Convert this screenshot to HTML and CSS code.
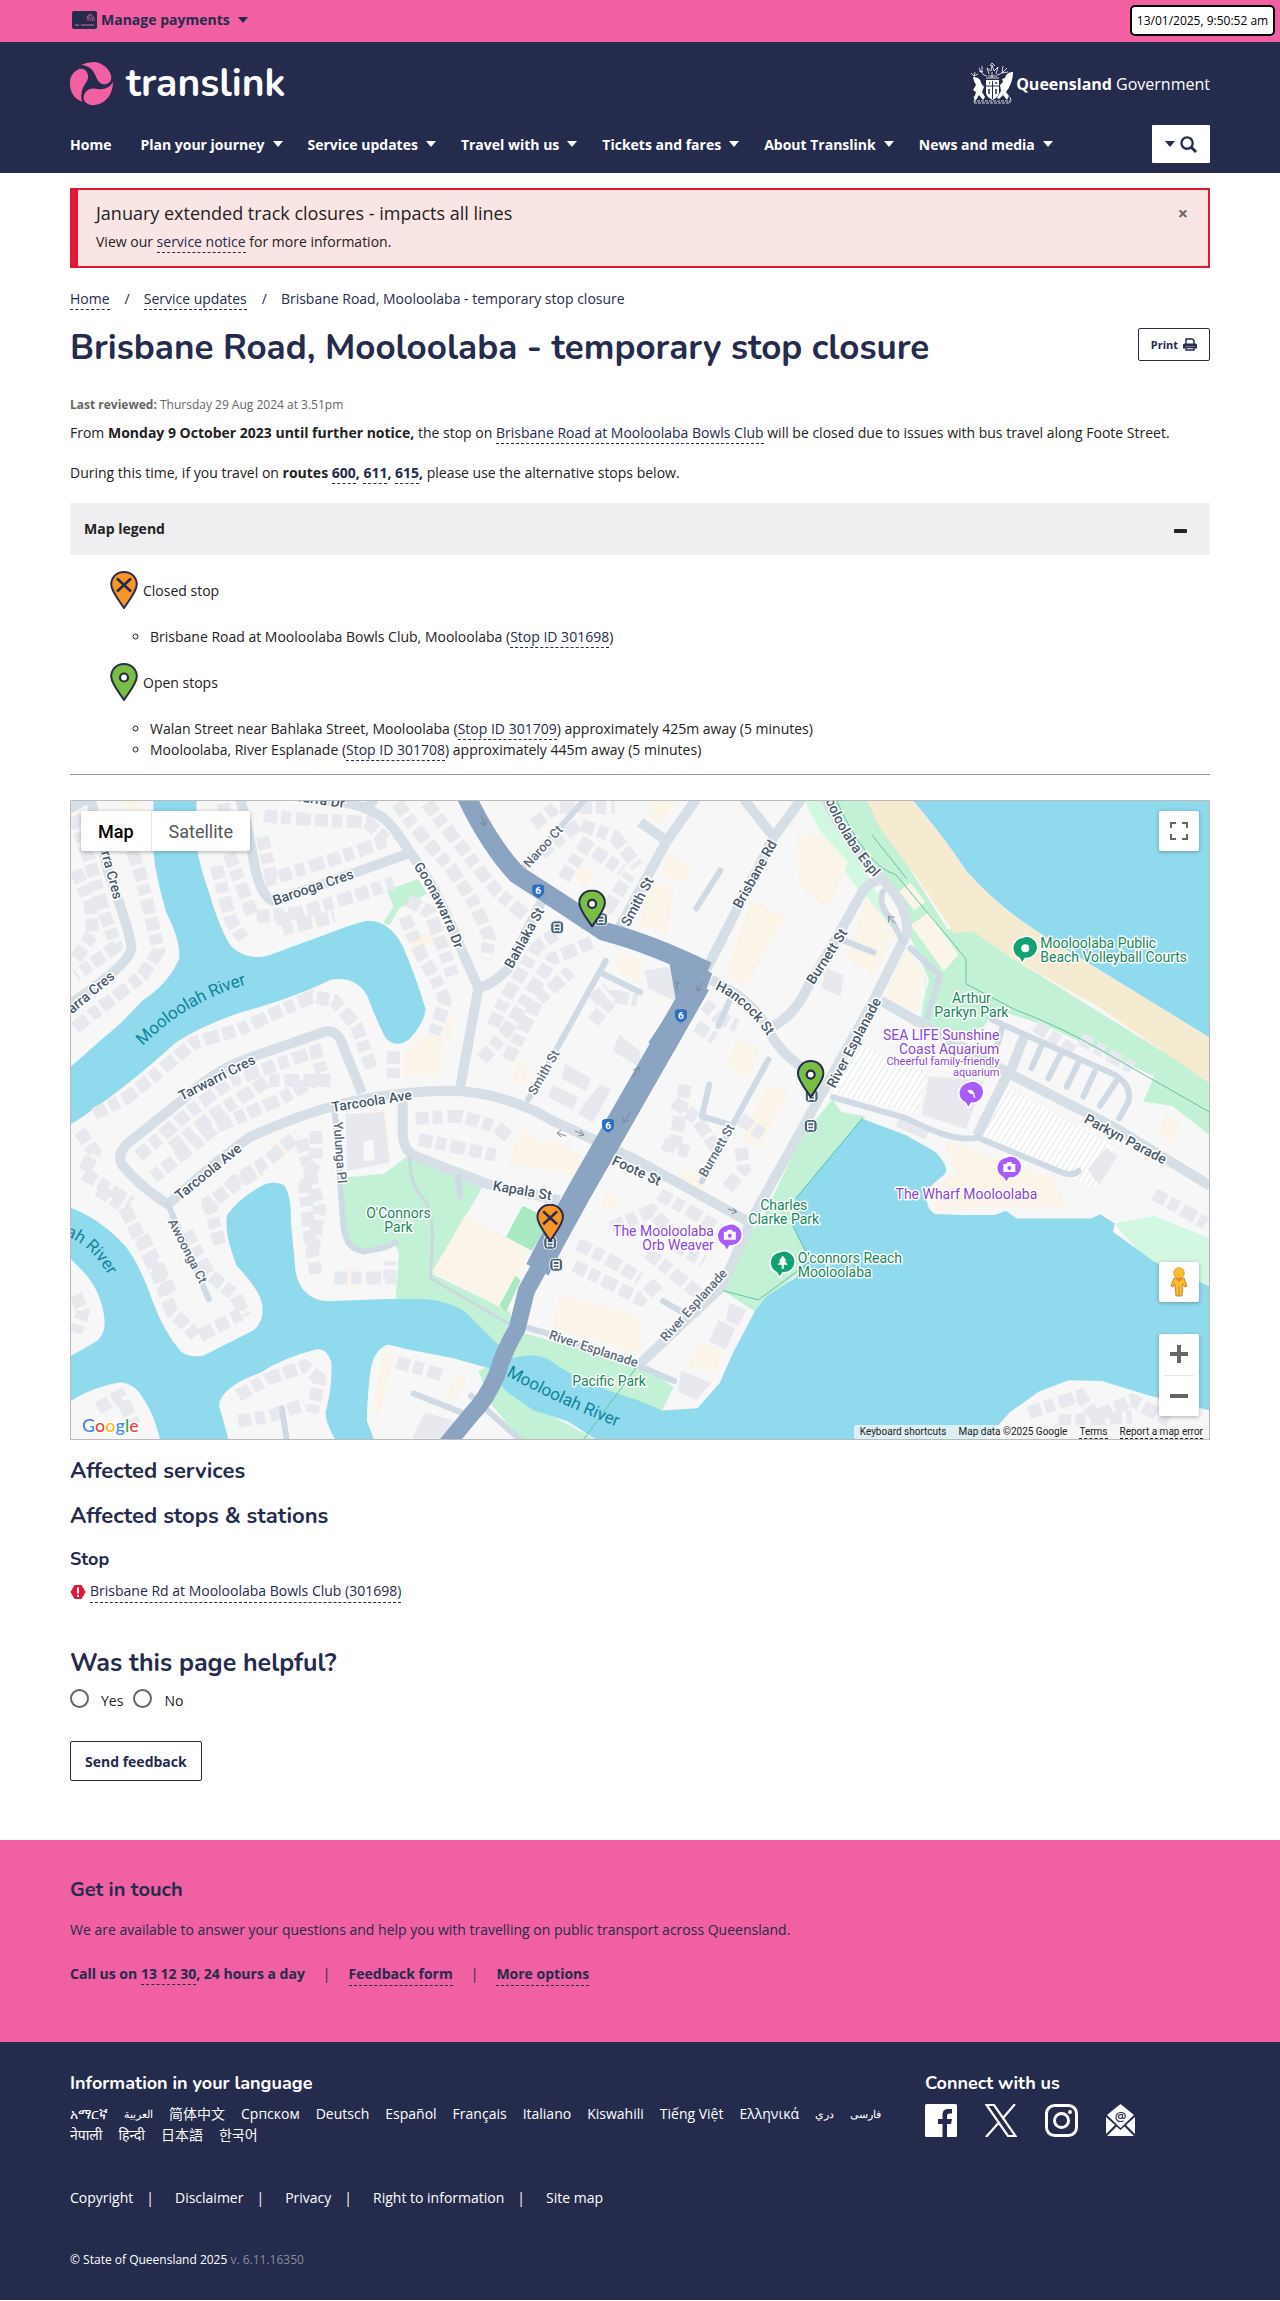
FILE: index.html
```html
<!DOCTYPE html>
<html lang="en">
<head>
<meta charset="utf-8">
<meta name="viewport" content="width=device-width, initial-scale=1">
<title>Brisbane Road, Mooloolaba - temporary stop closure | Translink</title>
<link rel="stylesheet" href="styles.css">
</head>
<body>
<svg class="sprite" width="0" height="0" aria-hidden="true">
  <symbol id="pin-closed" viewBox="0 0 28 38"><path d="M14 1C6.500 1 1.200 6.500 1.200 13.500 1.200 20 8 28 14 37 20 28 26.800 20 26.800 13.500 26.800 6.500 21.500 1 14 1Z" fill="#f99427" stroke="#252b4c" stroke-width="2"/><path d="M7 7.500 21 20.500M21 7.500 7 20.500" stroke="#252b4c" stroke-width="2.600"/></symbol>
  <symbol id="pin-open" viewBox="0 0 28 38"><path d="M14 1C6.500 1 1.200 6.500 1.200 13.500 1.200 20 8 28 14 37 20 28 26.800 20 26.800 13.500 26.800 6.500 21.500 1 14 1Z" fill="#78be43" stroke="#252b4c" stroke-width="2"/><circle cx="14" cy="14.500" r="4" fill="#fff" stroke="#252b4c" stroke-width="2.200"/></symbol>
  <symbol id="bus" viewBox="0 0 14 14"><rect x=".5" y=".5" width="13" height="13" rx="4" fill="#4b6478" stroke="#fff"/><path d="M4 3.500h6v6.500H4z" fill="none" stroke="#fff" stroke-width="1.300"/><path d="M4 7h6M4.500 10v1.500M9.500 10v1.500" stroke="#fff" stroke-width="1.300"/></symbol>
  <symbol id="route6" viewBox="0 0 14 15"><path d="M1 2.500 3.500 1h7L13 2.500V8c0 3-2.500 5-6 6.500C3.500 13 1 11 1 8Z" fill="#2c6fc4"/></symbol>
</svg>

<div class="topbar">
  <div class="wrap">
    <button class="payments" type="button">
      <svg width="25" height="18" viewBox="0 0 25 18" aria-hidden="true"><rect width="25" height="18" rx="2" fill="#252b4c"/><path d="M3 14h4M9 14h13" stroke="#f060a2" stroke-width="1.200"/><path d="M16 10c0-8 6-8 6 0M18 10c0-5 2.500-5 2.500 0M15 8c0-3 2-5 4-5" fill="none" stroke="#f060a2" stroke-width=".8"/></svg>
      <span>Manage payments</span><i class="caret"></i>
    </button>
  </div>
  <time class="stamp" datetime="2025-01-13T09:50:52">13/01/2025, 9:50:52 am</time>
</div>

<header class="header">
  <div class="wrap">
    <div class="brands">
      <a class="logo" href="#">
        <svg width="43" height="44" viewBox="0 0 43 44" aria-hidden="true"><g fill="#f060a2"><path d="M11 3Q17 0 24 0C36 1 43 12 41 18 38 24 30 24 27 17 24 10 22 4 11 3Z"/><path d="M0 24C-1 15 3 10 9 7 17 5 20 14 17 19 12 26 10 32 12 40Q1 35 0 24Z"/><path d="M43 20C43 34 34 42 25 43 17 44 12 39 14 33 17 26 23 26 28 27 35 28 40 25 43 20Z"/></g></svg>
        <span>translink</span>
      </a>
      <a class="qld" href="#">
        <svg width="44" height="42" viewBox="0 0 44 42" aria-hidden="true"><path d="M16 17h13v12c0 4-3 6-6.500 8-3.500-2-6.500-4-6.500-8Z" fill="#fff"/><path d="M16 23h13M22.500 18v18" stroke="#252b4c"/><path d="M19 26v5M26 26v5M19 20h1M25 20h2" stroke="#252b4c" stroke-width="1.500"/><path d="M3 14c4 0 8 2 8 6l3 4-2 5 3 5-2 3-4-5-3 5-2-1 2-7-3-2 3-5-2-4Z" fill="#fff"/><path d="M43 9c0 8-3 15-7 20l3 4-2 4-4-5-4 4-2-1 4-7-1-6 3-3-1-3 3-1c1-4 4-6 8-6Z" fill="#fff"/><g fill="none" stroke="#fff" stroke-width=".8"><path d="M1 10l3 3 1-4M4 13l4-2M9 5l2 4 3 3 3 1M9 8l4 1M12 3v6M37 5l-4 4-3 2-3 1M33 3l-1 7M38 9l-6 1M16 15l13 0M18 13h9M19 11l-2-6 4 3 1-6 2 6 4-4-2 7M20 3l2-3 3 3M22 9v6M4 33l1 5M40 34l1 4"/><path d="M4 40h36v-2H4Z" stroke-dasharray="3 1"/></g></svg>
        <span><b>Queensland</b> Government</span>
      </a>
    </div>
    <nav class="nav" aria-label="Main">
      <a href="#">Home</a>
      <a href="#">Plan your journey<i class="caret"></i></a>
      <a href="#">Service updates<i class="caret"></i></a>
      <a href="#">Travel with us<i class="caret"></i></a>
      <a href="#">Tickets and fares<i class="caret"></i></a>
      <a href="#">About Translink<i class="caret"></i></a>
      <a href="#">News and media<i class="caret"></i></a>
      <button class="search" type="button" aria-label="Search"><i class="caret"></i><svg width="17" height="17" viewBox="0 0 18 18" aria-hidden="true"><circle cx="7.500" cy="7.500" r="6" fill="none" stroke="#252b4c" stroke-width="2.400"/><path d="m12 12 5 5" stroke="#252b4c" stroke-width="3"/></svg></button>
    </nav>
  </div>
</header>

<main class="wrap">
  <section class="alert">
    <div>
      <h2>January extended track closures - impacts all lines</h2>
      <p>View our <a href="#">service notice</a> for more information.</p>
    </div>
    <button type="button" aria-label="Close">×</button>
  </section>

  <nav class="crumbs" aria-label="Breadcrumb"><a href="#">Home</a><span>/</span><a href="#">Service updates</a><span>/</span>Brisbane Road, Mooloolaba - temporary stop closure</nav>

  <div class="title">
    <h1>Brisbane Road, Mooloolaba - temporary stop closure</h1>
    <button class="btn print" type="button">Print <svg width="14" height="13" viewBox="0 0 14 13" aria-hidden="true"><path d="M3 6V1h6.500L11 2.500V6M3 9.500h8V12H3z" fill="#fff" stroke="#252b4c" stroke-width="1.400"/><path d="M1.500 5.500h11A1.500 1.500 0 0 1 14 7v3.500h-2.500v-2h-9v2H0V7a1.500 1.500 0 0 1 1.500-1.500Z" fill="#252b4c"/></svg></button>
  </div>

  <p class="reviewed"><b>Last reviewed:</b> Thursday 29 Aug 2024 at 3.51pm</p>
  <p class="lead">From <b>Monday 9 October 2023 until further notice,</b> the stop on <a href="#">Brisbane Road at Mooloolaba Bowls Club</a> will be closed due to issues with bus travel along Foote Street.</p>
  <p class="lead">During this time, if you travel on <b>routes <a href="#">600</a>, <a href="#">611</a>, <a href="#">615</a>,</b> please use the alternative stops below.</p>

  <section class="legend">
    <button class="legend-head" type="button" aria-expanded="true">Map legend<i class="minus"></i></button>
    <div class="legend-body">
      <p><svg width="28" height="38"><use href="#pin-closed"/></svg>Closed stop</p>
      <ul><li>Brisbane Road at Mooloolaba Bowls Club, Mooloolaba (<a href="#">Stop ID 301698</a>)</li></ul>
      <p><svg width="28" height="38"><use href="#pin-open"/></svg>Open stops</p>
      <ul>
        <li>Walan Street near Bahlaka Street, Mooloolaba (<a href="#">Stop ID 301709</a>) approximately 425m away (5 minutes)</li>
        <li>Mooloolaba, River Esplanade (<a href="#">Stop ID 301708</a>) approximately 445m away (5 minutes)</li>
      </ul>
    </div>
  </section>

  <section class="map" aria-label="Map">
    <svg class="canvas" viewBox="0 0 1140 640" preserveAspectRatio="xMidYMid slice">
      <defs>
        <pattern id="hatch" width="5" height="5" patternUnits="userSpaceOnUse" patternTransform="scale(2.700 2.380) rotate(32)"><path d="M1 0v5" stroke="#dfe1e3"/></pattern>
        <path id="l-river1" d="M72 246Q113 203 176 184"/>
        <path id="l-river2" d="M-6 436Q24 446 44 488"/>
        <path id="l-river3" d="M436 576Q490 606 562 633"/>
        <path id="l-goon" d="M343 66Q369 102 390 164"/>
        <path id="l-hancock" d="M645 189Q676 202 704 245"/>
        <path id="l-espl" d="M752 -12Q768 42 822 96"/>
      </defs>
      <g class="geo" transform="translate(-10 -10) scale(.37 .421)">
        <path class="park" d="M882 238 965 210 992 245 915 280 890 320 872 315 900 275ZM775 920 875 912 935 872 1140 945 1005 1150 1215 1240 1230 1275 1180 1330 1095 1250 985 1225 905 1220 915 1100 900 1075 820 1105 770 1080 765 940ZM1250 1290 1568 1370 1600 1380 1658 1420 1625 1480 1568 1475 1440 1430 1340 1375 1215 1355ZM1130 1380 1165 1370 1205 1430 1460 1550 1250 1550 1165 1460Z"/>
        <path class="park-lt" d="M2010 20 2088 150 2178 260 2268 350 2343 450 2328 540 2430 590 2300 400 2080 20ZM2853 1030 2960 1012 3110 1065V1190L2950 1130Z"/>
        <path class="park" d="M2080 20 2140 150 2250 250 2300 350 2350 450 2328 540 2428 590 2500 560 2528 520 2668 560 2790 610 2960 680 2930 740 3008 750 3110 820V690L2568 395 2470 330 2400 330 2180 20Z"/>
        <path class="park" d="M2088 735 2113 765 2180 775 1988 970 1978 1030 2035 1110 1888 1245 1793 1190 1818 1100 1898 1020 2008 820Z"/>
        <path class="water" d="M250 20V143Q255 200 285 290 325 360 320 400 290 460 220 500L160 555 100 600 20 662V798Q160 720 310 600 380 560 480 530 640 490 730 450 800 440 830 490 860 560 880 590 910 615 945 590 985 550 987 520 960 440 925 370 890 310 830 310 780 320 740 335L560 393Q500 405 460 370 430 330 400 240 375 180 367 130V20Z"/>
        <path class="water" d="M20 990Q110 1020 175 1085 215 1130 250 1220 280 1290 325 1335 350 1350 385 1345L520 1285Q550 1265 545 1225 540 1190 475 1130 440 1050 450 1010 480 970 545 940 575 925 605 940 625 970 622 1020L635 1145Q650 1210 720 1215L880 1210H985Q1050 1215 1095 1240L1180 1315 1225 1350Q1300 1330 1345 1370 1440 1420 1560 1450L1628 1475 1723 1470 1783 1410 1818 1340 1878 1240 1908 1205 1988 1160 2020 1110 1978 1030 1988 970 2168 780 2288 820 2368 860Q2410 900 2390 915L2343 950Q2340 1010 2380 1008L2438 1010 2528 1010 2558 1000 2588 1018H2788L2813 1008 2853 1030 2848 1050 2958 1120 3110 1180V1475L2948 1440 2818 1405 2728 1403 2648 1430 2568 1480 2498 1550H1460L1370 1500 1280 1475 1205 1430 1160 1375 1060 1350 940 1330 885 1318Q850 1330 840 1370 830 1420 828 1500L850 1550H745Q715 1500 716 1480 735 1420 732 1360 720 1325 690 1330 600 1350 540 1385 430 1420 428 1465 440 1500 455 1550H270Q250 1480 225 1450 200 1410 160 1408 80 1420 20 1456V1348Q60 1330 100 1308 120 1290 118 1260 110 1190 60 1145L20 1108Z"/>
        <path class="water" d="M2303 20Q2390 110 2450 190 2540 280 2660 345L3110 588V20Z"/>
        <path class="sand" d="M2180 20H2303Q2390 110 2450 190 2540 280 2660 345L3110 588V697L2818 520 2568 395 2468 335 2418 340 2328 220 2218 90Z"/>
        <path class="shop" d="M170 24H218V46H170ZM1000 580 1040 590 1025 675 925 680 930 625ZM1040 540H1062L1055 600 1035 590ZM1235 640 1265 645 1255 705 1222 695ZM1250 805 1300 835 1330 830 1415 870 1395 920 1330 900 1310 905 1270 895 1205 890ZM565 840 600 830 618 865 585 880ZM670 290 695 282 710 312 680 325ZM945 350 1005 335 1010 365 955 380ZM1095 1010 1270 1095 1205 1235 1005 1145ZM1510 390 1568 400V460L1500 425ZM1475 955 1510 970 1495 1000 1465 990ZM1350 1200 1568 1250V1340L1460 1310 1330 1280 1340 1240ZM870 1340 900 1345 865 1480 845 1475ZM1070 1390 1100 1400 1065 1450 1045 1440ZM775 1130 810 1140 800 1188 768 1180ZM1600 24H1660L1630 80 1590 50ZM1580 210 1660 230 1640 340 1570 320ZM1640 150 1708 180 1690 220 1625 195ZM1870 260 1960 300 1850 470 1800 430ZM1990 110 2060 100 2130 170 2080 280 2000 230ZM2180 250 2260 340 2200 440 2130 400ZM2290 370 2340 440 2320 530 2230 490ZM1830 590 1890 610 1860 690 1800 650ZM1910 700 1970 720 1890 850 1840 830ZM2300 320 2350 290 2430 390 2390 430ZM2270 240 2300 220 2340 265 2310 285ZM2390 830 2690 920 2720 990 2520 990 2370 1000 2350 950 2420 910ZM2990 770 3030 790 3010 840 2970 820ZM1730 1310 1790 1330 1770 1390 1700 1370ZM1690 900 1750 920 1730 970 1660 940ZM1400 180 1440 195 1420 225 1395 210Z"/>
        <path class="lot" d="M2158 605 2343 670 2318 770 2093 720ZM2553 700 2853 850 2803 945 2473 820Z"/>
        <path fill="url(#hatch)" d="M2158 605 2343 670 2318 770 2093 720ZM2553 700 2853 850 2803 945 2473 820Z"/>
        <path class="pitch" d="M1250 988 1325 1020 1275 1095 1205 1062ZM1230 1155 1245 1165 1205 1240 1187 1225Z"/>
        <path class="build" d="M770 770 875 765 890 885 775 905ZM2350 680 2500 690 2450 805 2330 770ZM985 1480 1070 1500 1040 1542H950ZM2270 780 2350 810 2340 830 2260 800ZM1680 1380 1760 1410 1720 1450 1670 1430ZM1810 1220 1855 1235 1835 1275 1800 1260ZM1780 1260 1825 1280 1800 1330 1755 1310ZM2780 900 2830 850 2860 870 2810 940ZM1365 650 1435 685 1420 715 1355 685ZM1330 700 1400 730 1385 760 1320 730ZM1420 740 1460 700 1490 710 1440 790 1400 770ZM1510 580 1568 620V660L1495 620ZM2070 420 2120 440 2110 490 2060 470ZM1580 430 1640 420 1670 450 1660 500 1590 470Z"/>
        <path class="white" d="M820 835 845 830 850 880 820 882Z"/>
        <g class="rows">
          <path d="M35 60 75 160 120 300 150 370 40 440"/><path d="M165 70 215 200 240 290 265 380 220 440 30 570"/><path d="M40 190 80 270 85 340 40 400"/>
          <path d="M420 180 460 310 500 360"/><path d="M440 30 455 150 520 300"/><path d="M550 60 680 70 830 75 890 125"/><path d="M545 110 570 210 750 160 880 120"/><path d="M530 300 650 290 760 260 900 220"/><path d="M600 290 600 330 740 300"/>
          <path d="M930 300 980 400 1010 440 1040 500 1010 580"/><path d="M940 260 1000 290 1060 440"/><path d="M910 30 960 90 1060 190 1120 270 1160 350 1150 400"/><path d="M990 30 1080 130 1180 240 1260 300"/>
          <path d="M90 770 180 730 360 600 480 570 680 490 740 500 800 560 840 660"/><path d="M210 870 340 770 460 690 690 620 710 680 580 740 420 800 250 920"/><path d="M300 850 400 780 560 690 740 690"/><path d="M900 620V690"/>
          <path d="M50 810 90 860 60 910 190 980"/><path d="M100 950 170 990 260 1150 300 1240 370 1300 500 1240"/><path d="M220 1060 300 1200"/><path d="M340 1050 400 1150 470 1200 500 1250"/><path d="M390 1000 470 930 560 880 640 820"/><path d="M430 1080 400 980 540 900"/>
          <path d="M690 810V880L660 940 670 1040 690 1150"/><path d="M650 830 700 1000 680 1100"/><path d="M740 1160H890V1120"/><path d="M960 780 1080 775 1180 800 1220 830"/><path d="M970 830 1080 850 1190 870"/>
          <path d="M1170 560 1200 500 1290 370 1340 340"/><path d="M1140 640 1200 580 1330 400 1440 360"/><path d="M1210 640 1290 500 1380 430"/><path d="M1440 550 1500 490 1560 500"/><path d="M1440 500 1480 470"/>
          <path d="M1300 150 1400 80 1500 110 1560 180"/><path d="M1280 80 1340 40 1500 40"/><path d="M1360 210 1420 130 1520 190"/><path d="M1400 320 1480 280 1540 200"/>
          <path d="M40 1200 60 1240 40 1290"/><path d="M100 1470 160 1440 200 1510"/><path d="M480 1440 560 1400 660 1370 700 1400 680 1480"/><path d="M480 1500 560 1490 660 1460"/><path d="M910 1360 1030 1390"/>
          <path d="M1400 1080 1470 1110 1568 1160"/><path d="M1390 1130 1568 1210 1620 1170"/><path d="M1490 1040 1600 1000 1650 1050"/><path d="M1590 1100 1660 1150 1730 1200"/><path d="M1620 960 1720 1010 1790 1050"/><path d="M1660 1080 1740 1120"/>
          <path d="M1710 480 1780 540 1830 560"/><path d="M1720 560 1770 590"/><path d="M1630 840 1700 860"/><path d="M1660 740 1720 780 1780 860"/><path d="M1690 700 1660 850"/><path d="M1840 780 1900 820"/><path d="M1840 850 1850 900 1800 950"/>
          <path d="M2640 560 2740 620"/><path d="M2960 960 3100 1030"/><path d="M2620 1480 2760 1440 2800 1490 2900 1450 3000 1500"/><path d="M2700 1500 2900 1490"/><path d="M2760 590 2900 660"/>
        </g>
        <g class="road">
          <path d="M700 20Q850 30 900 90 950 150 1000 220 1050 300 1085 380 1110 430 1130 470"/><path d="M825 40 850 20"/>
          <path d="M485 20Q505 80 520 160 540 262 580 262 650 240 780 200L940 150"/><path d="M1080 710 1130 470Q1170 460 1210 425L1300 265"/>
          <path d="M290 985Q420 880 510 825 620 780 740 750 850 725 960 718 1100 705 1200 735 1260 750 1330 785L1440 830 1560 880 1860 1025"/>
          <path d="M290 985Q210 940 165 890 150 865 180 840L330 735Q420 660 530 630L710 575Q745 565 760 600L815 720"/>
          <path d="M80 20 130 200Q185 330 190 370 195 410 20 510"/><path d="M20 45 70 20"/>
          <path d="M925 735V820Q930 860 960 870L1150 935 1350 975"/>
          <path d="M1500 345 1640 120 1720 20M1568 75 1640 120M1745 430 1930 110 2005 20M1930 110 1848 20"/>
          <path d="M1760 450Q1860 490 1910 560 1940 620 2010 660L2050 690M1930 560Q1990 530 2020 470L2100 350 2170 240Q2190 215 2215 215"/>
          <path d="M2070 20Q2120 110 2200 190 2300 270 2290 340L2200 500 2060 720 1870 1020 1790 1180 1560 1370"/>
          <path d="M2220 500 2560 670 2850 800 3110 940M2560 680 2480 820M2570 670 2610 580"/>
        </g>
        <g class="lane">
          <path d="M740 750 765 1040Q775 1100 830 1095 880 1090 905 1075M290 985 400 1210M1265 735 1475 405M1465 435 1568 480M1245 190 1420 20M2225 240Q2210 270 2250 310L2280 360M2300 375 2380 440 2345 540M2090 730 2290 780Q2420 840 2480 825L2700 905Q2740 920 2755 905M1735 930 1915 640M1810 795 1735 775 1755 700M1250 1275 1330 1295 1568 1370 1660 1405M955 1435 1085 1480M1110 1440 1250 1550M598 1470 612 1550M1785 190 1720 280M2100 350 2200 385M1630 1215 1690 1245M1780 560 1810 500M1075 920 1080 965"/>
          <path d="M2520 545 2850 675Q2900 700 2890 740L2865 780M2658 600 2628 660M2708 625 2673 685M2753 650 2723 705M2798 670 2768 728M2858 690 2813 750M2550 560 2530 620"/>
        </g>
        <path class="path" d="M945 870Q940 930 980 970 1010 1000 1005 1080L1000 1160 1215 1270"/>
        <path class="trail" d="M2100 24Q2180 180 2260 200L2450 400V460L2580 520Q2700 560 2800 610L3110 765M1978 1030 2030 1120 1888 1212 1793 1190M2170 780 1990 970M2195 105 2290 210M1560 1370 1410 1550"/>
        <path class="hwy top" d="M1095 10Q1160 130 1235 200L1350 265 1470 335Q1600 365 1750 430"/>
        <path class="hwyfill" d="M1640 375 1763 435 1740 490 1660 620 1590 600 1665 500Z"/>
        <path class="hwy mid" d="M1725 460 1540 745 1400 960 1325 1080 1290 1140"/>
        <path class="hwy low" d="M1310 1110 1260 1190 1235 1280Q1200 1330 1180 1390 1150 1450 1115 1480L1040 1560"/>
      </g>
      <g class="arrows"><path d="m411 15 4 10m-5-3 5 3 1-6M563 277l6-10m-6 3 6-3 1 6M554 322l6-10m-7 4v7l6-3M487 333l9 3m-5-6-4 3 4 4M505 331l9 4m-4-5 4 5-6 1M607 190v-9m-3 3 3-3 3 3M628 190l5-8m-6 3v6l5-2M819 117l7 6m-7-1v-6l6 1M658 409l9 3m-4-4 4 4-5 2"/></g>

      <g class="st">
        <text transform="translate(214 -1) rotate(8)">awarra Dr</text>
        <text transform="translate(204 105) rotate(-19)">Barooga Cres</text>
        <text transform="translate(26 37) rotate(75)">darra Cres</text>
        <text transform="translate(1 214) rotate(-40)">arra Cres</text>
        <text><textPath href="#l-goon">Goonawarra Dr</textPath></text>
        <text transform="translate(442 169) rotate(-61)">Bahlaka St</text>
        <text transform="translate(559 127) rotate(-62)">Smith St</text>
        <text transform="translate(111 301) rotate(-27)">Tarwarri Cres</text>
        <text transform="translate(262 312) rotate(-9)">Tarcoola Ave</text>
        <text transform="translate(109 401) rotate(-39)">Tarcoola Ave</text>
        <text transform="translate(422 390) rotate(10)">Kapala St</text>
        <text transform="translate(541 364) rotate(25)">Foote St</text>
        <text transform="translate(671 109) rotate(-61)">Brisbane Rd</text>
        <text transform="translate(744 185) rotate(-57)">Burnett St</text>
        <text><textPath href="#l-hancock">Hancock St</textPath></text>
        <text transform="translate(765 289) rotate(-62)">River Esplanade</text>
        <text><textPath href="#l-espl">Mooloolaba Espl</textPath></text>
        <text transform="translate(1014 322) rotate(28)">Parkyn Parade</text>
      </g>
      <g class="st minor">
        <text transform="translate(459 68) rotate(-48)">Naroo Ct</text>
        <text transform="translate(465 296) rotate(-60)">Smith St</text>
        <text transform="translate(263 322) rotate(86)">Yulunga Pl</text>
        <text transform="translate(97 422) rotate(63)">Awoonga Ct</text>
        <text transform="translate(636 378) rotate(-60)">Burnett St</text>
        <text transform="translate(478 539) rotate(18)">River Esplanade</text>
        <text transform="translate(596 543) rotate(-48)">River Esplanade</text>
      </g>
      <g class="wt"><text><textPath href="#l-river1">Mooloolah River</textPath></text><text><textPath href="#l-river2">ah River</textPath></text><text><textPath href="#l-river3">Mooloolah River</textPath></text></g>
      <g class="poi green">
        <text class="mid" x="328" y="418">O'Connors</text><text class="mid" x="328" y="432">Park</text>
        <text class="mid" x="539" y="586">Pacific Park</text>
        <text class="mid" x="714" y="410">Charles</text><text class="mid" x="714" y="424">Clarke Park</text>
        <text x="728" y="463">O'connors Reach</text><text x="728" y="477">Mooloolaba</text>
        <text class="mid" x="902" y="203">Arthur</text><text class="mid" x="902" y="217">Parkyn Park</text>
        <text x="971" y="148">Mooloolaba Public</text><text x="971" y="162">Beach Volleyball Courts</text>
      </g>
      <g class="poi purple">
        <text class="end" x="644" y="436">The Mooloolaba</text><text class="end" x="644" y="450">Orb Weaver</text>
        <text class="end" x="930" y="240">SEA LIFE Sunshine</text><text class="end" x="930" y="254">Coast Aquarium</text>
        <text class="end sm" x="930" y="265">Cheerful family-friendly</text><text class="end sm" x="930" y="276">aquarium</text>
        <text class="mid" x="897" y="399">The Wharf Mooloolaba</text>
      </g>
      <g stroke="#fff" stroke-width="1.500">
        <path fill="#12a171" d="M953 137a11 11 0 1 1 3 21l-3 5-3-5a11 11 0 0 1 3-21ZM710 452a11 11 0 1 1 3 21l-3 5-3-5a11 11 0 0 1 3-21Z"/>
        <path fill="#a95cfb" d="M899 282a11 11 0 1 1 3 21l-3 5-3-5a11 11 0 0 1 3-21ZM937 357a11 11 0 1 1 3 21l-3 5-3-5a11 11 0 0 1 3-21ZM657 425a11 11 0 1 1 3 21l-3 5-3-5a11 11 0 0 1 3-21Z"/>
      </g>
      <g fill="#fff"><circle cx="956" cy="148" r="4"/><path d="m713 456 4 5h-2l3 4h-4v4h-2v-4h-4l3-4h-2ZM898 290q7-2 8 8l-2-1v-3q-4 1-6-4ZM934 364h3l1-2h4l1 2h3v8h-12ZM654 432h3l1-2h4l1 2h3v8h-12Z"/></g>
      <g fill="#a95cfb"><circle cx="940" cy="368" r="2"/><circle cx="660" cy="436" r="2"/></g>
      <g class="shield"><use href="#route6" x="461" y="83" width="14" height="15"/><use href="#route6" x="531" y="318" width="14" height="15"/><use href="#route6" x="604" y="208" width="14" height="15"/><text x="468" y="94">6</text><text x="538" y="329">6</text><text x="611" y="219">6</text></g>
      <use href="#bus" x="480" y="120" width="14" height="14"/><use href="#bus" x="524" y="112" width="14" height="14"/><use href="#bus" x="473" y="436" width="14" height="14"/><use href="#bus" x="479" y="458" width="14" height="14"/><use href="#bus" x="735" y="289" width="14" height="14"/><use href="#bus" x="734" y="319" width="14" height="14"/>
      <use href="#pin-open" x="508" y="89" width="28" height="38"/><use href="#pin-open" x="727" y="260" width="28" height="38"/><use href="#pin-closed" x="466" y="404" width="28" height="38"/>
      <text class="google" x="11" y="633"><tspan fill="#4285f4">G</tspan><tspan fill="#ea4335">o</tspan><tspan fill="#fbbc04">o</tspan><tspan fill="#4285f4">g</tspan><tspan fill="#34a853">l</tspan><tspan fill="#ea4335">e</tspan></text>
    </svg>
    <div class="types"><button class="on" type="button">Map</button><button type="button">Satellite</button></div>
    <button class="ctl full" type="button" aria-label="Toggle fullscreen"><svg width="18" height="18" viewBox="0 0 18 18"><path d="M1 6V1h5M12 1h5v5M17 12v5h-5M6 17H1v-5" fill="none" stroke="#666" stroke-width="2"/></svg></button>
    <button class="ctl man" type="button" aria-label="Street View"><svg width="18" height="30" viewBox="0 0 18 30"><path d="M4 11h10l3 8-2 1-2-3-1 12H6L5 17l-2 3-2-1Z" fill="#fbbc2d" stroke="#a67a25" stroke-width=".8"/><path d="m5 11 4 4 4-4Z" fill="#f0812b"/><circle cx="9" cy="6" r="5.300" fill="#fbbc2d" stroke="#d99a1f" stroke-width=".8"/><path d="M9 20v9" stroke="#c98a1f"/></svg></button>
    <div class="zoom"><button type="button" aria-label="Zoom in"><svg width="18" height="18" viewBox="0 0 18 18"><path d="M0 9h18M9 0v18" stroke="#666" stroke-width="4"/></svg></button><button type="button" aria-label="Zoom out"><svg width="18" height="18" viewBox="0 0 18 18"><path d="M0 9h18" stroke="#666" stroke-width="4"/></svg></button></div>
    <div class="credits"><button type="button">Keyboard shortcuts</button><span>Map data ©2025 Google</span><a href="#">Terms</a><a href="#">Report a map error</a></div>
  </section>

  <h2 class="h2">Affected services</h2>
  <h2 class="h2">Affected stops &amp; stations</h2>
  <h3 class="h3">Stop</h3>
  <p class="stopline"><svg width="16" height="16" viewBox="0 0 16 16" aria-hidden="true"><path d="M4.500 1h7L15.500 8l-4 7h-7L.5 8Z" fill="#e31837"/><path d="M8 3.500v6M8 11v2" stroke="#fff" stroke-width="2"/></svg><a href="#">Brisbane Rd at Mooloolaba Bowls Club (301698)</a></p>

  <form class="helpful">
    <h2>Was this page helpful?</h2>
    <div class="radios"><input type="radio" name="helpful" id="yes"><label for="yes">Yes</label><input type="radio" name="helpful" id="no"><label for="no">No</label></div>
    <button class="btn" type="button">Send feedback</button>
  </form>
</main>

<section class="touch">
  <div class="wrap">
    <h2>Get in touch</h2>
    <p>We are available to answer your questions and help you with travelling on public transport across Queensland.</p>
    <div class="ways"><span>Call us on <a href="#">13 12 30</a>, 24 hours a day</span><i>|</i><a href="#">Feedback form</a><i>|</i><a href="#">More options</a></div>
  </div>
</section>

<footer class="footer">
  <div class="wrap">
    <div class="cols">
      <div>
        <h2>Information in your language</h2>
        <div class="langs"><a href="#">አማርኛ</a><a class="arabic" href="#">العربية</a><a href="#">简体中文</a><a href="#">Српском</a><a href="#">Deutsch</a><a href="#">Español</a><a href="#">Français</a><a href="#">Italiano</a><a href="#">Kiswahili</a><a href="#">Tiếng Việt</a><a href="#">Ελληνικά</a><a class="arabic" href="#">دري</a><a class="arabic" href="#">فارسی</a><a href="#">नेपाली</a><a href="#">हिन्दी</a><a href="#">日本語</a><a href="#">한국어</a></div>
      </div>
      <div>
        <h2>Connect with us</h2>
        <div class="social">
          <a href="#" aria-label="Facebook"><svg width="32" height="33" viewBox="0 0 32 33"><rect width="32" height="33" rx="1.500" fill="#fff"/><path d="M17.500 33V20H13v-5h4.500v-4c0-4.500 2.500-6 6-6H27v4.500h-2.500c-2 0-2.500 1-2.500 2.500v3h5l-1 5h-4v13Z" fill="#252b4c"/></svg></a>
          <a href="#" aria-label="X"><svg width="32" height="33" viewBox="0 0 32 33"><path d="M1.500 1h7.500l21.500 31H23ZM30 0 18.500 13.500M13.500 19 1 33" fill="none" stroke="#fff" stroke-width="2.200"/></svg></a>
          <a href="#" aria-label="Instagram"><svg width="33" height="33" viewBox="0 0 33 33"><rect x="1.500" y="1.500" width="30" height="30" rx="8" fill="none" stroke="#fff" stroke-width="3"/><circle cx="16.500" cy="16.500" r="7" fill="none" stroke="#fff" stroke-width="3"/><circle cx="25" cy="8" r="2" fill="#fff"/></svg></a>
          <a href="#" aria-label="Email"><svg width="29" height="33" viewBox="0 0 29 33"><path d="M14.500 0 28 11 14.500 24 1 11ZM0 13v17l9-9ZM29 13v17l-9-9ZM1 32 10.500 22.500l4 3.500 4-3.500L28 32Z" fill="#fff"/><text x="14.500" y="17" text-anchor="middle" font-size="13" font-weight="600" fill="#252b4c">@</text></svg></a>
        </div>
      </div>
    </div>
    <nav class="flinks" aria-label="Footer"><a href="#">Copyright</a><a href="#">Disclaimer</a><a href="#">Privacy</a><a href="#">Right to information</a><a href="#">Site map</a></nav>
    <p class="copy">© State of Queensland 2025 <span>v. 6.11.16350</span></p>
  </div>
</footer>
</body>
</html>
```
FILE: styles.css
```css
:root {
  --navy: #252b4c;
  --pink: #f060a2;
  --red: #e31837;
  --text: #222;
  --head: Nunito, Lato, "Open Sans", sans-serif;
}
* { box-sizing: border-box; }
body {
  margin: 0;
  background: #fff;
  color: var(--text);
  font: 14px/21px "Open Sans", "Noto Sans", "Noto Sans CJK SC", "Noto Sans CJK KR", sans-serif;
}
h1, h2, h3, p, ul { margin: 0; }
a { color: var(--navy); text-decoration: none; }
button { font: inherit; color: inherit; cursor: pointer; }
b { font-weight: 700; }
svg { display: block; }
.sprite { position: absolute; }
.wrap { width: 100%; max-width: 1200px; margin: 0 auto; padding: 0 30px; }
.caret {
  display: inline-block;
  border: 5px solid transparent;
  border-top: 6px solid currentColor;
  border-bottom: 0;
}

.topbar { position: relative; background: var(--pink); height: 42px; display: flex; align-items: center; color: var(--navy); }
.payments { display: flex; align-items: center; gap: 4px; padding: 0; margin-left: 2px; margin-bottom: 3px; border: 0; background: none; font-weight: 700; }
.payments .caret { margin-left: 4px; }
.stamp { position: absolute; top: 5px; right: 5px; width: 145px; text-align: center; background: #fff; color: #000; border: 2px solid #000; border-radius: 5px; font-size: 12px; line-height: 27px; }

.header { background: var(--navy); color: #fff; padding: 20px 0 10px; }
.brands { display: flex; justify-content: space-between; align-items: center; height: 44px; }
.logo, .qld { display: flex; align-items: center; color: #fff; }
.logo { gap: 13px; font: 700 39px/44px var(--head); }
.qld { gap: 2px; font-size: 16px; }
.nav { display: flex; align-items: center; gap: 25px; margin-top: 19px; font-weight: 700; }
.nav a { display: flex; align-items: center; gap: 8px; color: #fff; }
.nav a:first-child { margin-right: 4px; }
.search { margin-left: auto; display: flex; align-items: center; justify-content: center; gap: 5px; width: 58px; height: 38px; border: 0; border-radius: 1px; background: #fff; color: var(--navy); padding: 0; }

.alert { display: flex; justify-content: space-between; align-items: flex-start; margin-top: 15px; padding: 10px 20px 14px 18px; border: 2px solid var(--red); border-left-width: 8px; background: #f9e5e3; color: var(--text); }
.alert h2 { font-size: 18px; line-height: 26px; font-weight: 400; }
.alert p { margin-top: 5px; }
.alert button { border: 0; background: none; padding: 0; font-weight: 700; font-size: 18px; line-height: 26px; color: #666; }
.alert p a, .crumbs a, .lead a, .legend a, .stopline a, .ways a { border-bottom: 1px dashed var(--navy); padding-bottom: 1px; }

.crumbs { margin-top: 20px; color: var(--navy); }
.crumbs span { margin: 0 14px 0 15px; }
.title { display: flex; justify-content: space-between; align-items: flex-start; margin-top: 19px; }
h1 { color: var(--navy); font: 700 35px/40px var(--head); }
.btn { display: flex; align-items: center; gap: 5px; border: 1px solid var(--navy); border-radius: 2px; background: #fff; color: var(--navy); font-weight: 700; height: 40px; padding: 0 14px; }
.print { font-size: 11px; height: 33px; padding: 0 12px; }
.reviewed { margin-top: 26px; font-size: 12px; color: #666; }
.lead { margin-top: 7px; }
.lead + .lead { margin-top: 19px; }

.legend { margin-top: 20px; padding-bottom: 14px; border-bottom: 1px solid #999; }
.legend-head { display: flex; width: 100%; height: 52px; align-items: center; justify-content: space-between; border: 0; border-radius: 2px; background: #efeff1; padding: 0 23px 2px 14px; font-weight: 700; }
.minus { width: 13px; height: 4px; border-radius: 1px; background: #222; margin-top: 6px; }
.legend-body { padding: 16px 0 0 40px; }
.legend-body p { display: flex; align-items: center; gap: 5px; height: 38px; }
.legend-body ul { margin: 17px 0 16px; padding-left: 40px; list-style: circle; }
.legend-body ul:last-child { margin-bottom: 0; }

.map { position: relative; overflow: hidden; margin-top: 25px; height: 640px; border: 1px solid #bbb; background: #f7f7f7; font-family: Roboto, sans-serif; }
.canvas { width: 100%; height: 100%; font-family: Roboto, sans-serif; }
.geo path { vector-effect: non-scaling-stroke; }
.water { fill: #90daee; }
.park { fill: #c3f1d5; }
.park-lt { fill: #d3f8e2; }
.pitch { fill: #a8e9c1; }
.sand { fill: #f5ebd0; }
.shop { fill: #faf5e8; }
.lot { fill: #fff; }
.build { fill: #e8e9ef; }
.white { fill: #f8f8f8; }
.rows path { fill: none; stroke: #e8e9ef; stroke-width: 13; stroke-dasharray: 13 4 10 5 15 4; }
.road path { fill: none; stroke: #d6dfe6; stroke-width: 10; }
.lane path { fill: none; stroke: #cfdae5; stroke-width: 6; stroke-linecap: round; stroke-linejoin: round; }
.path { fill: none; stroke: #cbd8e0; stroke-width: 3; }
.trail { fill: none; stroke: #66c2a0; stroke-width: 1; }
.hwy { fill: none; stroke: #8aa4c1; stroke-linejoin: round; }
.hwyfill { fill: #8aa4c1; }
.hwy.top { stroke-width: 19; }
.hwy.mid { stroke-width: 25; }
.hwy.low { stroke-width: 17; }
.arrows { fill: none; stroke: #7c8893; stroke-width: 1; }
.st, .poi, .google { paint-order: stroke; stroke: #fff; stroke-width: 3px; stroke-linejoin: round; }
.st { fill: #47596b; font-size: 14px; font-weight: 500; }
.minor { fill: #5b6b7c; font-size: 13px; }
.wt { fill: #0d8499; font-size: 17px; }
.poi { font-size: 14px; }
.green { fill: #16875c; }
.purple { fill: #8a45d6; }
.mid { text-anchor: middle; }
.end { text-anchor: end; }
.sm { font-size: 11px; }
.shield text { fill: #fff; font-size: 10px; font-weight: 700; text-anchor: middle; }
.google { font: 500 18px Lato, sans-serif; }
.types, .ctl, .zoom, .credits { position: absolute; background: #fff; border-radius: 2px; }
.types, .ctl, .zoom { box-shadow: 0 1px 4px rgba(0, 0, 0, .3); }
.types { top: 10px; left: 10px; display: flex; height: 40px; }
.types button { border: 0; background: none; padding: 0 17px; font-size: 18px; color: #565656; }
.types .on { color: #000; font-weight: 500; border-right: 1px solid #e6e6e6; }
.ctl, .zoom { right: 10px; width: 40px; height: 40px; border: 0; padding: 0; display: flex; align-items: center; justify-content: center; }
.full { top: 10px; }
.man { bottom: 137px; }
.zoom { bottom: 23px; height: 82px; flex-direction: column; padding: 0 5px; }
.zoom button { flex: 1; width: 30px; border: 0; padding: 6px; background: none; }
.zoom button + button { border-top: 1px solid #e6e6e6; }
.credits { right: 0; bottom: 0; display: flex; height: 14px; background: rgba(245, 245, 245, .75); color: #222; font-size: 10px; line-height: 14px; }
.credits > * { padding: 0 6px; border: 0; background: none; color: #222; }
.credits a { padding: 0; margin: 0 6px; border-bottom: 1px dashed #222; }

.h2 { margin-top: 16px; color: var(--navy); font: 700 22px/30px var(--head); }
.h2 + .h2 { margin-top: 15px; }
.h3 { margin-top: 16px; color: var(--navy); font: 700 18px/24px var(--head); }
.stopline { display: flex; align-items: center; gap: 4px; margin-top: 9px; }
.helpful { margin-top: 44px; padding-bottom: 59px; }
.helpful h2 { color: var(--navy); font: 700 25px/32px var(--head); }
.radios { display: flex; align-items: center; height: 24px; margin: 7px 0 31px; }
.radios input { appearance: none; width: 19px; height: 19px; margin: 0; border: 2px solid #666; border-radius: 50%; }
.radios label { margin: 4px 10px 0 12px; }

.touch { background: var(--pink); color: var(--navy); padding: 35px 0 56px; }
.touch h2 { font: 700 20px/30px var(--head); }
.touch p { margin-top: 14px; }
.ways { display: flex; margin-top: 23px; font-weight: 700; }
.ways i { font-style: normal; font-weight: 400; margin: 0 18px; }

.footer { background: var(--navy); color: #fff; padding: 27px 0 30px; }
.footer a { color: #fff; }
.footer h2 { font: 700 18px/28px var(--head); }
.cols { display: grid; grid-template-columns: 3fr 1fr; }
.langs { display: flex; flex-wrap: wrap; column-gap: 16px; margin-top: 6px; padding-right: 10px; }
.langs .arabic { font-size: 11px; }
.social { display: flex; gap: 28px; margin-top: 7px; }
.flinks { display: flex; margin-top: 42px; }
.flinks a + a::before { content: "|"; margin: 0 21px 0 13px; }
.copy { margin-top: 41px; font-size: 12px; }
.copy span { color: #8a8d9c; }
```
